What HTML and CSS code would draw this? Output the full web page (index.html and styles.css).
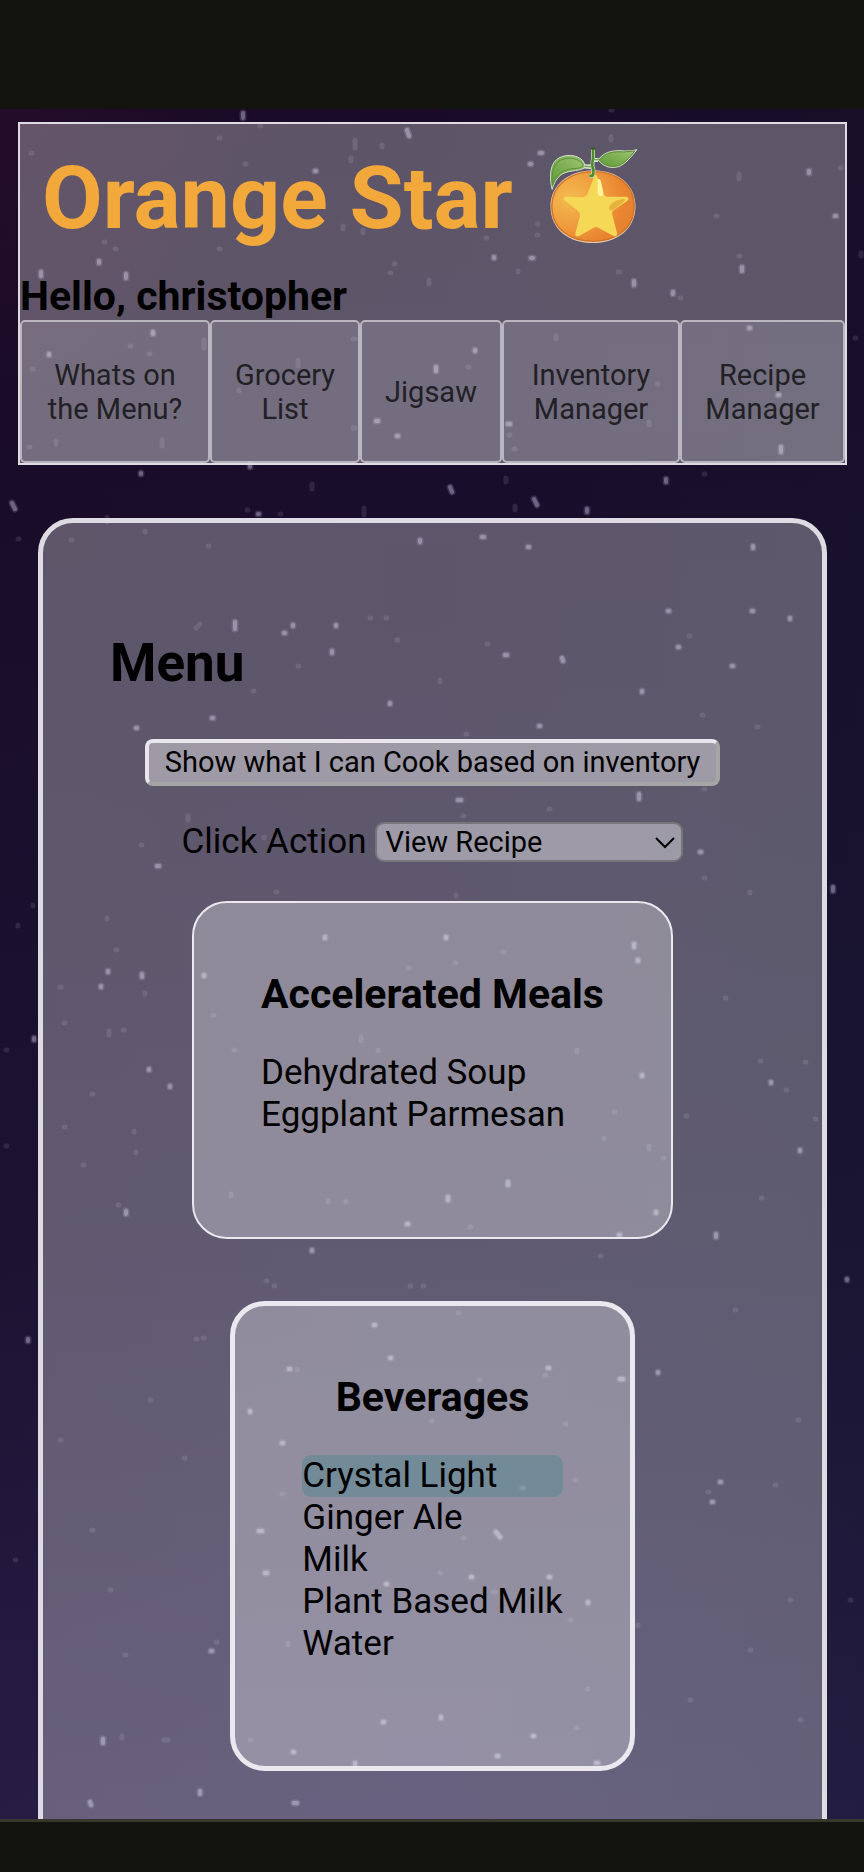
FILE: index.html
```html
<!DOCTYPE html>
<html lang="en">
<head>
<meta charset="utf-8">
<meta name="viewport" content="width=device-width, initial-scale=1">
<title>Orange Star</title>
<link rel="stylesheet" href="styles.css">
</head>
<body>
<div class="bar-top"></div>
<div class="page">
  <svg class="sky" viewBox="0 109 864 1711" preserveAspectRatio="xMidYMin slice" aria-hidden="true">
    <defs>
      <path id="bright" d="M315 171h1M407 130l2 6M243 113v5M99 261v2M126 274v4M41 272v4M540 153h2M530 164h1M809 171v2M835 216h1M494 257v1M531 258h2M634 281v4M673 292v2M742 267v4M153 332v2M49 354v1M376 421h2M397 436h1M436 367v4M141 473v1M250 465v2M12 503l3 6M258 514h1M420 540v2M475 350v1M749 328h1M778 395h1M508 424h2M781 447v5M666 479v3M450 487l2 5M534 499l3 6M587 509v3M482 537h2M528 547h1M753 546v2M293 625v1M284 633h1M235 622v7M336 625v1M332 651v2M390 703v1M212 718h1M136 728h1M157 866h2M668 611h1M752 611h1M790 618v1M678 647h1M505 655h2M562 658l1 3M732 666h1M642 691v1M539 726h1M458 800h3M639 794v5M700 852h1M833 887v4M325 937v1M446 937v1M634 944v3M638 960v1M108 971v1M142 974v3M101 986v1M204 975v1M34 1038v2M149 1069v1M170 1086v1M642 1075v1M771 1082v1M800 1150v1M508 1182v3M448 1197v3M126 1211v3M407 1224h1M656 1212v1M619 1235h1M716 1234v3M312 1250v1M847 1279v1M289 1369h1M374 1325h1M390 1358h1M548 1368h1M620 1379h3M250 1411v1M282 1443h1M259 1531h3M496 1532l4 5M265 1573h2M471 1577h1M549 1577h1M386 1584h1M588 1602v1M211 1651h1M383 1722h1M441 1717v1M533 1736h1M293 1752h1M355 1763v3M497 1756h1M200 1791v3M294 1803h3M596 1763h2M522 1488h1M658 1372v1M103 1739v4M90 1802l1 3M28 1339v2M720 1482h1M712 1502h1"/>
    </defs>
    <path class="star-dim" d="M31 153h1M219 138h1M245 164h1M351 158v3M355 140v8M382 145v2M219 249h1M343 226v3M363 230v3M394 264h1M390 273h1M429 280v4M104 242h1M115 249h1M260 126h1M611 137v3M739 174v5M840 168h1M716 216h1M537 224h1M537 235h1M486 238h1M518 271v1M618 272h2M739 256h1M611 110h1M680 298h1M861 253v3M130 346h1M149 354h1M204 340v8M353 339h2M298 360v6M239 390v1M32 369h1M353 428h2M162 440v6M56 441v3M29 447h1M18 539h1M280 514h1M312 484v5M145 531v1M107 517v5M71 540h1M208 546h1M247 510h1M364 508v7M468 367h1M556 336v3M509 435h1M514 449h1M649 422v3M657 384h1M704 474h1M506 478v4M515 506v4M855 338h1M370 618h1M386 618h1M397 640h1M298 666h1M188 816v4M141 845h1M264 837v1M196 628l4-4M253 691h1M276 892h1M107 918v1M689 636h1M487 644h1M440 680v2M466 734h1M463 816h1M704 789h1M549 809h1M704 878h1M750 892v1M456 895v1M702 715h1M757 727h1M33 905v1M18 925v1M503 952h1M408 968h1M455 963h1M116 950h1M145 993v1M60 987h1M64 1023h1M109 1031v4M123 1030h1M6 1050h1M213 1015h1M361 1037v4M378 1050v1M92 1094h1M64 1127h1M134 1131v1M136 1152v1M6 1146h1M83 1165h1M234 1050h1M786 1090h1M805 1062h1M760 1061h1M815 1119h1M686 1116h1M604 1138v1M614 1112h1M663 1158h1M328 1200v2M346 1201v1M231 1194v2M118 1205h1M470 1227h1M266 1281h1M274 1286h1M410 1286h1M423 1286h1M600 1256h1M761 1198h1M725 998h1M577 1050v2M649 1146v3M196 1339h1M203 1338h1M297 1369v1M458 1313h1M545 1375h1M479 1380h1M431 1421h1M565 1424h1M184 1458h1M282 1494h1M463 1538h1M440 1573h1M493 1592h2M216 1642h1M570 1620h1M288 1643v2M638 1625v1M587 1689h1M576 1728h1M250 1740h1M122 1736v2M164 1740h4M708 1492h1M775 1485h1M92 1530h1M790 1600h1M750 1650h1M110 1590h1M690 1700h1M800 1720h1M735 1310h1M798 1420h1M60 1440h1M150 1400h1M15 1560h1M850 1600h1M125 1655h1M575 1480h1"/>
    <use href="#bright" class="star-halo"/>
    <use href="#bright" class="star-core"/>
  </svg>

  <header class="masthead">
    <div class="brand">
      <h1 class="brand-name">Orange Star</h1>
      <svg class="brand-logo" viewBox="57 52 267 292" role="img" aria-label="Tangerine with a star">
        <defs>
          <radialGradient id="peel" cx="0.22" cy="0.38" r="0.8">
            <stop offset="0" stop-color="#f4bb50"/>
            <stop offset="0.5" stop-color="#ef9c3d"/>
            <stop offset="0.85" stop-color="#e98430"/>
            <stop offset="1" stop-color="#e6822f"/>
          </radialGradient>
          <linearGradient id="leaf" x1="0" y1="1" x2="1" y2="0">
            <stop offset="0" stop-color="#5f9b3b"/>
            <stop offset="0.55" stop-color="#80b055"/>
            <stop offset="1" stop-color="#9cc373"/>
          </linearGradient>
        </defs>
        <path d="M189 122C258 121 317 162 317 230C317 302 257 341 189 341C119 341 61 302 61 230C61 165 119 122 189 122Z" fill="#e6c9ac"/>
        <path d="M189 126C256 125 313 163 313 230C313 299 256 336 189 336C121 336 65 299 65 230C65 167 121 126 189 126Z" fill="url(#peel)" stroke="#cf7425" stroke-width="4"/>
        <path d="M66 180C58 148 58 110 78 91C99 71 143 74 158 93Q164 101 165 109L185 112L184 117L164 115C141 127 111 120 90 138Q74 151 66 180Z" fill="url(#leaf)" stroke="#d4dccb" stroke-width="3"/>
        <path d="M67 169C64 139 67 111 83 97C102 81 142 82 158 103C160 111 153 115 143 116C116 118 96 121 84 136Q72 151 67 169Z" fill="url(#leaf)" stroke="#5d9138" stroke-width="3"/>
        <path d="M192 87L207 88C226 64 254 61 285 64Q306 65 321 60C306 79 287 105 263 112C239 118 217 108 207 93L192 95Z" fill="url(#leaf)" stroke="#d4dccb" stroke-width="3"/>
        <path d="M209 90C227 68 252 65 281 67L315 64C300 83 282 104 260 109C241 113 222 106 209 90Z" fill="url(#leaf)" stroke="#5d9138" stroke-width="3"/>
        <path d="M201 140L222 196Q225 202 232 202L288 202Q300 205 294 213L249 244Q245 248 247 256L262 313Q261 324 251 320L205 295Q198 291 191 295L147 320Q134 324 136 311L150 259Q151 251 144 245L103 212Q97 201 109 202L160 203Q168 202 172 194L193 140Q197 133 201 140Z" fill="#f6d857"/>
        <path d="M203 149Q211 145 214 160L220 187Q220 202 211 200Q202 198 203 184Z" fill="#fdf59a"/>
        <path d="M237 235Q241 216 281 208Q291 209 276 222L251 241Q238 247 237 235Z" fill="#e5b23c"/>
        <path d="M189 56V87Q185 109 190 119Q192 132 187 139H178M188 91H204M186 111L163 110" fill="none" stroke="#d9e2d0" stroke-width="12"/>
        <path d="M189 57V87Q184 108 190 119Q192 133 187 139H178" fill="none" stroke="#4c8c29" stroke-width="8"/>
        <path d="M191 90H207M185 112L164 110" fill="none" stroke="#74a653" stroke-width="4"/>
        <path d="M183 57H196" stroke="#34541f" stroke-width="5"/>
      </svg>
    </div>
    <h3 class="greeting">Hello, christopher</h3>
    <nav class="tabs">
      <button class="tab" type="button">Whats on the Menu?</button>
      <button class="tab" type="button">Grocery List</button>
      <button class="tab" type="button">Jigsaw</button>
      <button class="tab" type="button">Inventory Manager</button>
      <button class="tab" type="button">Recipe Manager</button>
    </nav>
  </header>

  <main class="panel">
    <h2 class="panel-title">Menu</h2>
    <div class="controls">
      <button class="cook-button" type="button">Show what I can Cook based on inventory</button>
      <div class="action">
        <label for="click-action">Click Action</label>
        <div class="select-wrap">
          <select id="click-action" class="select">
            <option>View Recipe</option>
          </select>
          <svg class="chevron" viewBox="0 0 20 12" aria-hidden="true"><path d="M1 1L10 10L19 1"/></svg>
        </div>
      </div>
    </div>
    <div class="cards">
      <section class="card">
        <h3 class="card-title">Accelerated Meals</h3>
        <ul class="items">
          <li class="item">Dehydrated Soup</li>
          <li class="item">Eggplant Parmesan</li>
        </ul>
      </section>
      <section class="card card-thick">
        <h3 class="card-title">Beverages</h3>
        <ul class="items">
          <li class="item item-selected">Crystal Light</li>
          <li class="item">Ginger Ale</li>
          <li class="item">Milk</li>
          <li class="item">Plant Based Milk</li>
          <li class="item">Water</li>
        </ul>
      </section>
    </div>
  </main>
</div>
<div class="bar-bottom"></div>
</body>
</html>
```

FILE: styles.css
```css
* {
  box-sizing: border-box;
}

body {
  margin: 0;
  height: 100vh;
  display: flex;
  flex-direction: column;
  background: #13140e;
  color: #000;
  font: 35px/42px Roboto, "Liberation Sans", sans-serif;
}

h1,
h2,
h3,
ul {
  margin: 0;
  padding: 0;
}

.bar-top {
  flex: none;
  height: 109px;
}

.bar-bottom {
  flex: none;
  height: 53px;
  border-top: 3px solid #36372d;
}

.page {
  position: relative;
  flex: 1;
  min-height: 0;
  overflow: hidden;
  padding: 13px 17px 0 18px;
  background:
    radial-gradient(ellipse 240px 300px at 0 0, rgba(46, 14, 44, 0.5), transparent),
    linear-gradient(90deg, rgba(32, 8, 30, 0.15), transparent 50%, rgba(22, 24, 44, 0.3)),
    linear-gradient(#190b28, #180e2c 30%, #1b1435 65%, #281f49);
}

.sky {
  position: absolute;
  inset: 0;
  width: 100%;
  height: 100%;
  fill: none;
  stroke: #cfc8ea;
  stroke-linecap: round;
}

.star-dim {
  stroke-width: 5px;
  opacity: 0.13;
}

.star-halo {
  stroke-width: 7px;
  opacity: 0.18;
}

.star-core {
  stroke-width: 4px;
  opacity: 0.35;
}

.masthead {
  position: relative;
  border: 2px solid #dedce2;
  background: rgba(255, 255, 255, 0.3);
}

.brand {
  display: flex;
  align-items: flex-start;
  gap: 36px;
  padding: 23px 22px;
}

.brand-name {
  color: #f2a83b;
  font-size: 88px;
  line-height: 102px;
}

.brand-logo {
  width: 89px;
  height: 97px;
}

.greeting {
  font-size: 41px;
  line-height: 48px;
}

.tabs {
  display: grid;
  grid-template-columns: 190fr 150fr 142fr 178fr 165fr;
}

.tab {
  min-height: 143px;
  padding: 0 16px;
  border: 2px solid rgba(255, 255, 255, 0.5);
  border-radius: 5px;
  background: rgba(255, 255, 255, 0.14);
  color: #212025;
  font: 29px/34px Roboto, "Liberation Sans", sans-serif;
}

.panel {
  position: relative;
  margin: 53px 20px 0;
  padding: 109px 67px 240px;
  border: 5px solid #dedce2;
  border-radius: 35px;
  background: rgba(255, 255, 255, 0.3);
}

.panel-title {
  font-size: 53px;
  line-height: 62px;
}

.controls {
  display: flex;
  flex-direction: column;
  align-items: center;
  gap: 35px;
  margin: 45px 0 38px;
}

.cook-button {
  padding: 2px 16px 3px;
  border: 4px solid;
  border-color: #e9e7ed #a5a5a6 #a5a5a6 #e9e7ed;
  border-radius: 8px;
  background: rgba(255, 255, 255, 0.4);
  color: #000;
  font: 29px/34px Roboto, "Liberation Sans", sans-serif;
}

.action {
  display: flex;
  align-items: center;
  gap: 9px;
}

.select-wrap {
  position: relative;
}

.select {
  display: block;
  width: 308px;
  height: 40px;
  padding: 0 8px;
  appearance: none;
  border: 2px solid #77757b;
  border-radius: 9px;
  background: rgba(255, 255, 255, 0.4);
  color: #000;
  font: 29px/34px Roboto, "Liberation Sans", sans-serif;
}

.chevron {
  position: absolute;
  top: 15px;
  right: 8px;
  width: 20px;
  height: 12px;
  fill: none;
  stroke: #000;
  stroke-width: 2px;
  pointer-events: none;
}

.cards {
  display: flex;
  flex-direction: column;
  align-items: center;
  gap: 62px;
}

.card {
  padding: 67px;
  border: 2px solid #ebe9ef;
  border-radius: 35px;
  background: rgba(255, 255, 255, 0.3);
}

.card-thick {
  border-width: 5px;
}

.card-title {
  font-size: 41px;
  line-height: 48px;
  text-align: center;
}

.items {
  margin: 34px 0;
  list-style: none;
}

.item {
  border-radius: 9px;
}

.item-selected {
  background: rgba(95, 136, 146, 0.6);
}
```
